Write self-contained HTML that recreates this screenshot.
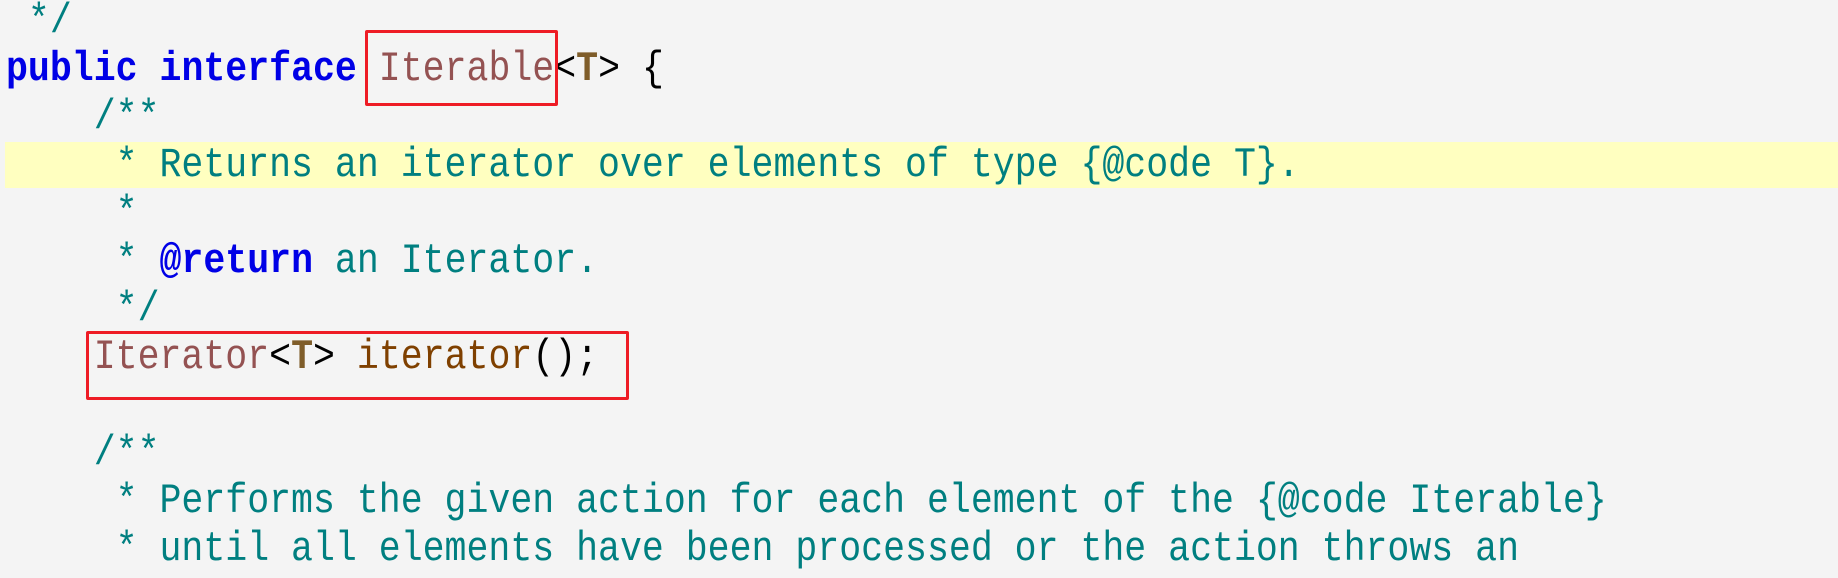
<!DOCTYPE html>
<html><head><meta charset="utf-8"><style>
html,body{margin:0;padding:0}
body{width:1838px;height:578px;background:#f4f4f4;position:relative;overflow:hidden;font-family:"Liberation Mono",monospace;font-size:42px}
.l{position:absolute;left:6px;height:48px;line-height:48px;white-space:pre;color:#007f80;transform:scaleX(0.87);transform-origin:0 50%}
.k{color:#0000e6;font-weight:bold}
.t{color:#945252}
.g{color:#7f5d2a;font-weight:bold}
.m{color:#7f4000}
.b{color:#000}
.hl{position:absolute;left:5px;top:142px;width:1833px;height:46px;background:#ffffc0}
.box{position:absolute;border:3px solid #ee1c25;border-radius:2px;box-sizing:border-box}
</style></head><body>
<div class="hl"></div>
<div class="l" style="top:-3px"> */</div>
<div class="l" style="top:45px"><span class="k">public</span> <span class="k">interface</span> <span class="t">Iterable</span><span class="b">&lt;</span><span class="g">T</span><span class="b">&gt; {</span></div>
<div class="l" style="top:93px">    /**</div>
<div class="l" style="top:141px">     * Returns an iterator over elements of type {@code T}.</div>
<div class="l" style="top:189px">     *</div>
<div class="l" style="top:237px">     * <span class="k">@return</span> an Iterator.</div>
<div class="l" style="top:285px">     */</div>
<div class="l" style="top:333px">    <span class="t">Iterator</span><span class="b">&lt;</span><span class="g">T</span><span class="b">&gt;</span> <span class="m">iterator</span><span class="b">();</span></div>
<div class="l" style="top:429px">    /**</div>
<div class="l" style="top:477px">     * Performs the given action for each element of the {@code Iterable}</div>
<div class="l" style="top:525px">     * until all elements have been processed or the action throws an</div>
<div class="box" style="left:365px;top:30px;width:193px;height:76px"></div>
<div class="box" style="left:86px;top:331px;width:543px;height:69px"></div>
</body></html>
